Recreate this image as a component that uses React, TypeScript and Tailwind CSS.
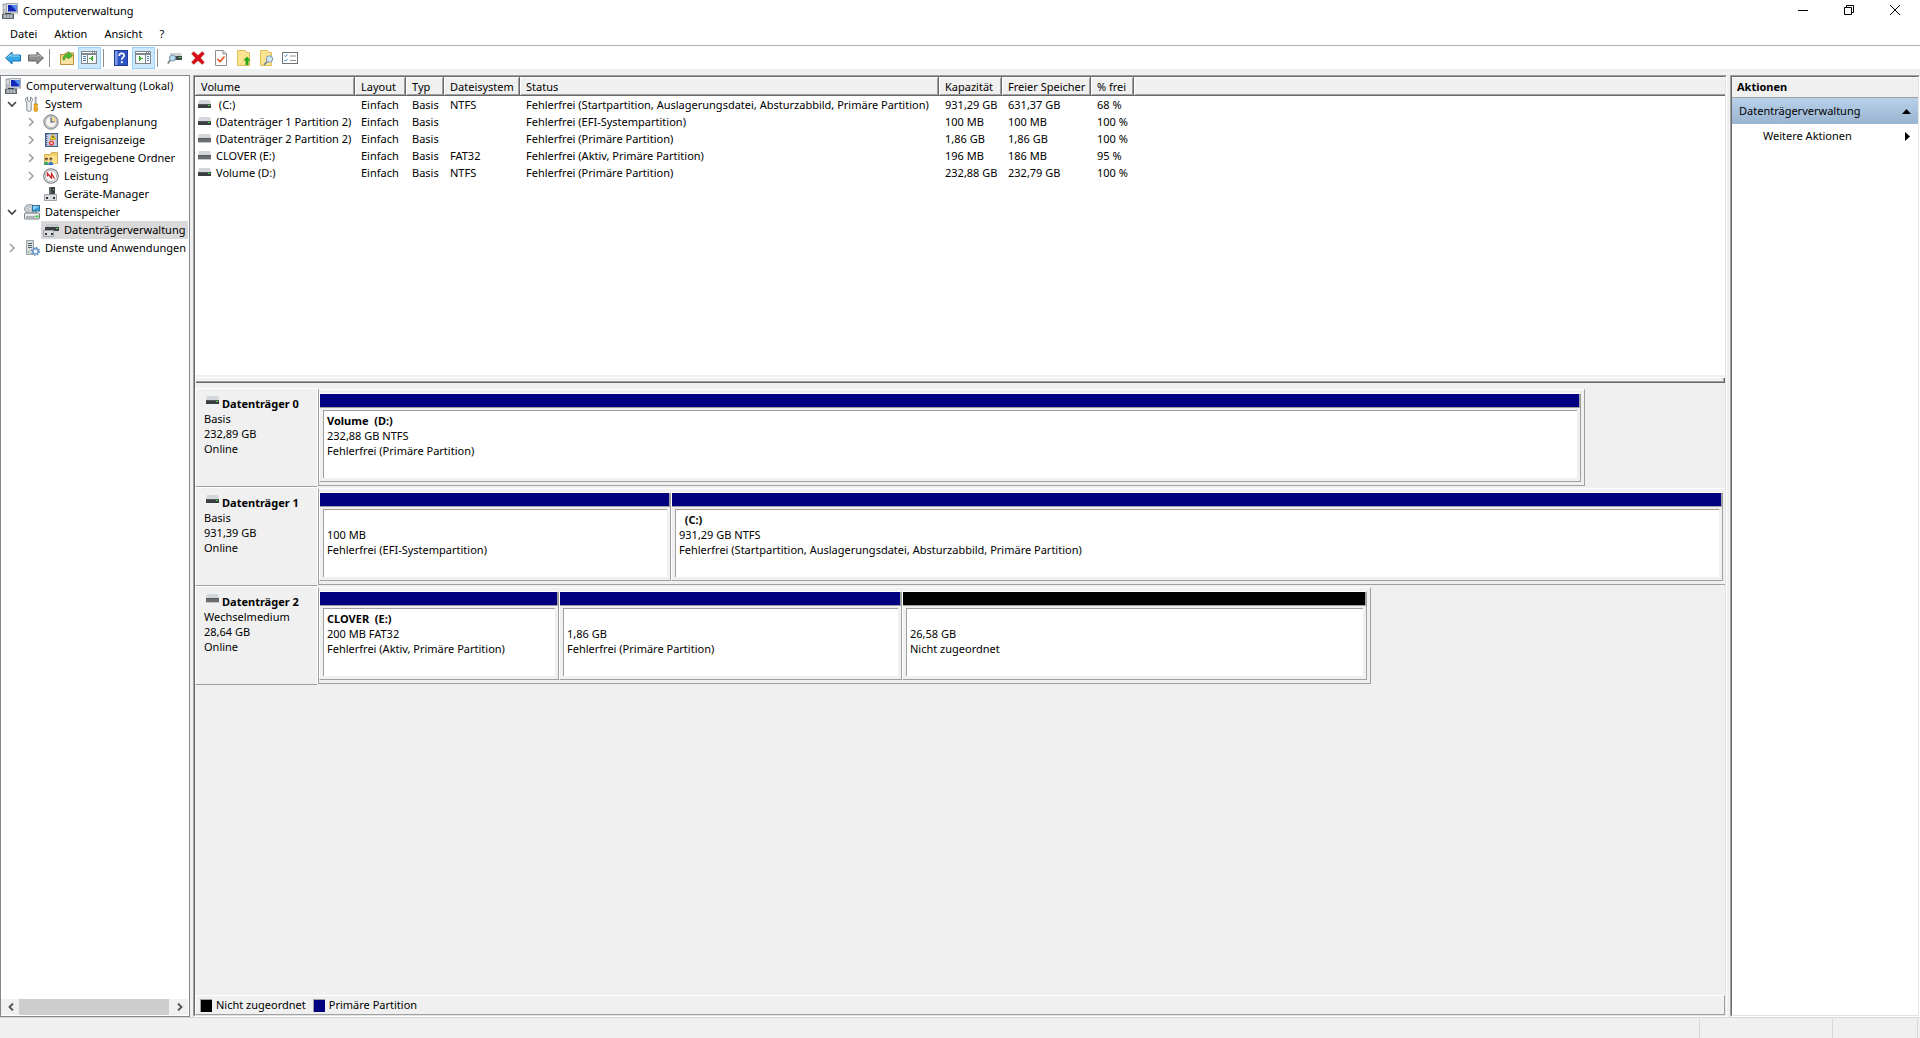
import type { ReactNode } from 'react'
import clsx from 'clsx'

/* ---------- Icons ---------- */

const ComputerIcon = () => (
  <svg width="16" height="16" viewBox="0 0 16 16" aria-hidden="true">
    <rect x="1" y="1" width="4" height="10" fill="#b9bec4" stroke="#7d848b" strokeWidth="0.6" />
    <path d="M1.500 3h3M1.500 5h3" stroke="#eef1f3" />
    <rect x="4.500" y="0.500" width="11" height="9.500" fill="#dfe3e6" stroke="#a3a9af" />
    <rect x="6" y="2" width="8.500" height="6.500" fill="#1426b8" />
    <path d="M9 2h5.500v6z" fill="#4f8cf0" />
    <path d="M8 10h4v2H8z" fill="#9aa1a8" />
    <rect x="0.500" y="11.500" width="11" height="4" fill="#8a939b" stroke="#5d656d" />
    <path d="M3 11v4M6 11v4M9 11v4" stroke="#d8dde1" />
    <path d="M3 10.500h6" stroke="#3c4349" />
  </svg>
)

const ToolsIcon = () => (
  <svg width="16" height="16" viewBox="0 0 16 16" aria-hidden="true">
    <path d="M3.500 1v3.500L5 5.500l1.500-1V1c2.400 1 2.600 4 .7 5.200V14c0 1.800-4.400 1.800-4.400 0V6.200C.900 5 1.100 2 3.500 1z" fill="#eceeef" stroke="#777c80" strokeWidth="0.9" />
    <path d="M11 1h1.500l.3 1.500-.6.5v5h-1.100V3l-.6-.5z" fill="#b4b8bb" stroke="#84898d" strokeWidth="0.5" />
    <path d="M10 8h3.500v1.500l-.6.8.6 1.200v3c0 1.200-3.500 1.200-3.500 0v-3l.6-1.200-.6-.8z" fill="#f3b01c" stroke="#b67a08" strokeWidth="0.6" />
  </svg>
)

const ClockIcon = () => (
  <svg width="16" height="16" viewBox="0 0 16 16" aria-hidden="true">
    <circle cx="8" cy="8" r="7.200" fill="#c3c8cc" stroke="#767b80" strokeWidth="0.9" />
    <circle cx="8" cy="8" r="5.500" fill="#f9f6ee" stroke="#9ca1a5" strokeWidth="0.6" />
    <path d="M8 8V2.700A5.300 5.300 0 0 1 13.300 8z" fill="#f2d398" />
    <path d="M8 3.500V8h3.500" fill="none" stroke="#3d5b8a" strokeWidth="1.100" />
  </svg>
)

const EventIcon = () => (
  <svg width="16" height="16" viewBox="0 0 16 16" aria-hidden="true">
    <rect x="2.500" y="1.500" width="12" height="13" fill="#aebbd0" stroke="#46608b" />
    <path d="M4 4h9M4 6h9M4 8h9M4 10h9M4 12h9" stroke="#e8edf5" strokeWidth="0.8" />
    <path d="M3.500 2v12" stroke="#3b578a" strokeWidth="1.500" strokeDasharray="1 1" />
    <path d="M10 2l3 5.500H7z" fill="#fbd21d" stroke="#a98604" strokeWidth="0.5" />
    <path d="M10 4v2" stroke="#222" />
    <circle cx="8.500" cy="11" r="2.600" fill="#dd3b32" />
    <path d="M7.300 9.800l2.400 2.400M9.700 9.800l-2.400 2.400" stroke="#fff" strokeWidth="0.9" />
  </svg>
)

const SharedFolderIcon = () => (
  <svg width="16" height="16" viewBox="0 0 16 16" aria-hidden="true">
    <path d="M1.500 4.500h6l1-2h6v11h-13z" fill="#f5d06c" stroke="#cfa03a" strokeWidth="0.8" />
    <path d="M2 6h12v7.500H2z" fill="#fbe08e" />
    <circle cx="3.500" cy="9" r="1.500" fill="#5f4326" />
    <circle cx="7.800" cy="9" r="1.500" fill="#5f4326" />
    <path d="M.8 15c0-4.500 5-4.500 5 0z" fill="#39a267" />
    <path d="M5.300 15c0-4.500 5-4.500 5 0z" fill="#3579c4" />
    <path d="M2.800 10h1.800M7 10h1.800" stroke="#f1c6a2" strokeWidth="1.200" />
  </svg>
)

const GaugeIcon = () => (
  <svg width="16" height="16" viewBox="0 0 16 16" aria-hidden="true">
    <circle cx="8" cy="8" r="7.300" fill="#fafafa" stroke="#73787c" strokeWidth="1.100" />
    <circle cx="8" cy="8" r="5.600" fill="#fff" stroke="#8d9195" strokeWidth="0.7" />
    <path d="M4.500 8.500v-3l4 4.500V5.500l3 5" fill="none" stroke="#d31e22" strokeWidth="1.300" />
  </svg>
)

const DeviceIcon = () => (
  <svg width="16" height="16" viewBox="0 0 16 16" aria-hidden="true">
    <path d="M6 1h6v8H6z" fill="#3c4045" />
    <path d="M6 1h2v8H6z" fill="#666c72" />
    <path d="M10 3h1v1h-1z" fill="#4be04b" />
    <path d="M1.500 8.500h12v6h-12z" fill="#d8dbdd" stroke="#9ba0a4" />
    <path d="M3 11h2v2H3zM10 11h2v2h-2z" fill="#2f3337" />
  </svg>
)

const StorageIcon = () => (
  <svg width="16" height="16" viewBox="0 0 16 16" aria-hidden="true">
    <ellipse cx="6" cy="5" rx="5.500" ry="4.500" fill="#c9ced2" stroke="#848a8f" strokeWidth="0.8" />
    <circle cx="6" cy="5" r="1.400" fill="#fff" stroke="#868c91" strokeWidth="0.5" />
    <rect x="8.500" y="1.500" width="7" height="5.500" fill="#3ca3dd" stroke="#2a6f9e" />
    <path d="M9 2h6L9 6z" fill="#8fd3f5" />
    <path d="M11 7.500h2V9h-2z" fill="#77808a" />
    <rect x="0.500" y="9" width="15" height="6" rx="1" fill="#e9ebec" stroke="#787e83" />
    <path d="M2 13h9" stroke="#6e7479" />
    <path d="M11.500 11.500h3v2h-3z" fill="#3ccf3c" />
  </svg>
)

const DiskManagementIcon = () => (
  <svg width="16" height="16" viewBox="0 0 16 16" aria-hidden="true">
    <path d="M4 2h11l1 3H2z" fill="#c5c9cc" />
    <path d="M2 5h14v4H2z" fill="#3b3f43" />
    <path d="M13 6h2v1h-2z" fill="#4be04b" />
    <path d="M0.500 8.500h10v6h-10z" fill="#dcdfe1" stroke="#9ba0a4" />
    <path d="M2 11h2v2H2zM8 11h2v2H8z" fill="#2f3337" />
  </svg>
)

const ServicesIcon = () => (
  <svg width="16" height="16" viewBox="0 0 16 16" aria-hidden="true">
    <path d="M2.500 0.500h7v14h-7z" fill="#d6dbde" stroke="#9aa1a6" />
    <path d="M4 3.500h4M4 5.500h4M4 7.500h4" stroke="#566069" />
    <path d="M4 12h1.500" stroke="#39b54a" />
    <circle cx="11.500" cy="11.300" r="2.700" fill="#fff" stroke="#6a9bcb" strokeWidth="1.700" />
    <circle cx="11.500" cy="11.300" r="4" fill="none" stroke="#5b8bbd" strokeWidth="1.200" strokeDasharray="1.500 1.640" />
  </svg>
)

const DriveIcon = ({ removable = false }: { removable?: boolean }) => (
  <svg width="13" height="9" viewBox="0 0 13 9" className="shrink-0" aria-hidden="true">
    <path d="M1 0h11l1 4H0z" fill="#d3d6da" />
    <path d="M0 4h13v4H0z" fill={removable ? '#6a6d70' : '#3a3d40'} />
    <path d="M0 4h13v1H0z" fill="#55585b" />
    {removable ? <path d="M0 8h13v1H0z" fill="#c2c6ca" /> : <path d="M10 5h2v1h-2z" fill="#35e535" />}
  </svg>
)

const Arrow = ({ back = false }: { back?: boolean }) => (
  <svg width="16" height="14" viewBox="0 0 16 14" className={back ? '' : 'rotate-180'} aria-hidden="true">
    <path
      d="M.6 7L7 1v3h8.500v6H7v3z"
      fill={back ? '#35a7e4' : '#8d8f91'}
      stroke={back ? '#1b6fae' : '#5c5e60'}
      strokeLinejoin="round"
    />
    <path d={back ? 'M2.500 6.500L6 3.200V5h8.500' : 'M2.500 8L6 10.800V9h8.500'} fill="none" stroke={back ? '#9adcf8' : '#c0c1c2'} />
  </svg>
)

const FolderArrowIcon = () => (
  <svg width="16" height="16" viewBox="0 0 16 16" aria-hidden="true">
    <path d="M1.500 4.500h4l1-1.500h8v11.500h-13z" fill="#f3cf73" stroke="#b98f38" />
    <path d="M2 8h12v6H2z" fill="#fae3a0" />
    <path d="M4 10c0-4 2-6 5-6V1.500l4.500 4L9 9V7C7 7 5.500 8 5.500 10z" fill="#4fbb35" stroke="#2b8a1a" strokeWidth="0.6" />
  </svg>
)

const PaneIcon = ({ right = false }: { right?: boolean }) => (
  <svg width="17" height="15" viewBox="0 0 17 15" shapeRendering="crispEdges" aria-hidden="true">
    <path d="M0 1h16v13H0z" fill="#7f868d" />
    <path d="M1 5h14v8H1z" fill="#fbfbfb" />
    <path d="M1 2h10v1H1zM12 2h1v1h-1zM14 2h1v1h-1z" fill="#fff" />
    {right ? (
      <>
        <path d="M10 5h1v8h-1z" fill="#7f868d" />
        <path d="M12 6h2v1h-2zM12 8h2v1h-2zM12 10h2v1h-2z" fill="#4f7db5" />
        <path d="M4 6v5l4-2.500z" fill="#35b22a" />
      </>
    ) : (
      <>
        <path d="M6 5h1v8H6z" fill="#7f868d" />
        <path d="M2 6h3v1H2zM2 8h3v1H2zM2 10h3v1H2z" fill="#4f7db5" />
        <path d="M12 6v5L8 8.500z" fill="#35b22a" />
      </>
    )}
  </svg>
)

const HelpIcon = () => (
  <svg width="14" height="16" viewBox="0 0 14 16" aria-hidden="true">
    <rect x="0.500" y="0.500" width="13" height="15" fill="#2f55c4" stroke="#1f3c96" />
    <path d="M1 1h2.500v14H1z" fill="#7e9be6" />
    <path d="M5.200 6c0-3.300 5-3.300 5-.5 0 2-2.400 2-2.400 4.300" fill="none" stroke="#fff" strokeWidth="1.700" />
    <circle cx="7.800" cy="12.200" r="1.100" fill="#fff" />
  </svg>
)

const DiskSearchIcon = () => (
  <svg width="16" height="14" viewBox="0 0 16 14" aria-hidden="true">
    <path d="M3 2h11l1 3H3z" fill="#cfd2d5" />
    <path d="M3 5h12v4H3z" fill="#44484c" />
    <path d="M12 6h2v1h-2z" fill="#35e535" />
    <circle cx="5.500" cy="7" r="3" fill="#bcdcf2" stroke="#7694ad" />
    <path d="M3.200 9.300L.8 12.500" stroke="#7b7f84" strokeWidth="1.800" />
  </svg>
)

const DeleteIcon = () => (
  <svg width="14" height="14" viewBox="0 0 14 14" aria-hidden="true">
    <path d="M2.800.7L7 4.600 11.200.7l2.100 2L9.400 7l3.900 4.300-2.100 2L7 9.400l-4.200 3.900-2.100-2L4.600 7 .7 2.700z" fill="#dc0d17" stroke="#a9060e" strokeWidth="0.6" />
  </svg>
)

const CheckDocIcon = () => (
  <svg width="12" height="16" viewBox="0 0 12 16" aria-hidden="true">
    <path d="M.5.5H8L11.500 4v11.500H.5z" fill="#fdfdfd" stroke="#8b8f93" />
    <path d="M8 .5V4h3.500" fill="none" stroke="#8b8f93" />
    <path d="M2.500 9L5 11.500 9.500 6.500" fill="none" stroke="#e8501c" strokeWidth="1.600" />
  </svg>
)

const FolderUpIcon = () => (
  <svg width="14" height="16" viewBox="0 0 14 16" aria-hidden="true">
    <path d="M.5.500h8l1 2h3v13H.500z" fill="#fbe391" stroke="#e2bf5d" />
    <path d="M10 6.500l3.700 4h-2.200V15h-3v-4.500H6.300z" fill="#2aa51c" />
  </svg>
)

const FolderSearchIcon = () => (
  <svg width="14" height="16" viewBox="0 0 14 16" aria-hidden="true">
    <path d="M.500.500h7l1 2h3v13H.500z" fill="#fbe391" stroke="#e2bf5d" />
    <circle cx="9.500" cy="9" r="3.200" fill="#cfe6f7" stroke="#7f99ae" />
    <path d="M7.200 11.500L4 15" stroke="#6d83a0" strokeWidth="1.700" />
  </svg>
)

const ChecklistIcon = () => (
  <svg width="16" height="14" viewBox="0 0 16 14" aria-hidden="true">
    <rect x="0.500" y="1.500" width="15" height="11" fill="#fff" stroke="#6d7378" />
    <path d="M2.500 4.500l1 1.200L5.500 3.500M2.500 9l1 1.200L5.500 8" fill="none" stroke="#3b86d0" />
    <path d="M8 5h6M8 9.500h6" stroke="#8b9094" />
  </svg>
)

const Chevron = ({ open = false }: { open?: boolean }) => (
  <svg width="10" height="10" viewBox="0 0 10 10" fill="none" strokeWidth="1.600" aria-hidden="true">
    {open ? <path d="M1 3l4 4 4-4" stroke="#404040" /> : <path d="M3 1l4 4-4 4" stroke="#a0a0a0" />}
  </svg>
)

/* ---------- Data ---------- */

type TreeNode = {
  label: string
  depth: 0 | 1 | 2
  icon: ReactNode
  open?: boolean
  selected?: boolean
}

const tree: TreeNode[] = [
  { label: 'Computerverwaltung (Lokal)', depth: 0, icon: <ComputerIcon /> },
  { label: 'System', depth: 1, icon: <ToolsIcon />, open: true },
  { label: 'Aufgabenplanung', depth: 2, icon: <ClockIcon />, open: false },
  { label: 'Ereignisanzeige', depth: 2, icon: <EventIcon />, open: false },
  { label: 'Freigegebene Ordner', depth: 2, icon: <SharedFolderIcon />, open: false },
  { label: 'Leistung', depth: 2, icon: <GaugeIcon />, open: false },
  { label: 'Geräte-Manager', depth: 2, icon: <DeviceIcon /> },
  { label: 'Datenspeicher', depth: 1, icon: <StorageIcon />, open: true },
  { label: 'Datenträgerverwaltung', depth: 2, icon: <DiskManagementIcon />, selected: true },
  { label: 'Dienste und Anwendungen', depth: 1, icon: <ServicesIcon />, open: false },
]

const indent = { 0: 'pl-0.5', 1: 'pl-[3px]', 2: 'pl-[22px]' }

const columns = [
  { label: 'Volume', width: 'w-[160px]' },
  { label: 'Layout', width: 'w-[51px]' },
  { label: 'Typ', width: 'w-[38px]' },
  { label: 'Dateisystem', width: 'w-[76px]' },
  { label: 'Status', width: 'w-[419px]' },
  { label: 'Kapazität', width: 'w-[63px]' },
  { label: 'Freier Speicher', width: 'w-[89px]' },
  { label: '% frei', width: 'w-[43px]' },
]

const volumes = [
  { name: ' (C:)', fs: 'NTFS', status: 'Fehlerfrei (Startpartition, Auslagerungsdatei, Absturzabbild, Primäre Partition)', size: '931,29 GB', free: '631,37 GB', pct: '68 %' },
  { name: '(Datenträger 1 Partition 2)', fs: '', status: 'Fehlerfrei (EFI-Systempartition)', size: '100 MB', free: '100 MB', pct: '100 %' },
  { name: '(Datenträger 2 Partition 2)', fs: '', status: 'Fehlerfrei (Primäre Partition)', size: '1,86 GB', free: '1,86 GB', pct: '100 %', removable: true },
  { name: 'CLOVER (E:)', fs: 'FAT32', status: 'Fehlerfrei (Aktiv, Primäre Partition)', size: '196 MB', free: '186 MB', pct: '95 %', removable: true },
  { name: 'Volume (D:)', fs: 'NTFS', status: 'Fehlerfrei (Primäre Partition)', size: '232,88 GB', free: '232,79 GB', pct: '100 %' },
]

// `share` is the lane width in percent, `weight` the relative width of a partition in its lane
const disks = [
  {
    name: 'Datenträger 0',
    type: 'Basis',
    size: '232,89 GB',
    share: 90.05,
    partitions: [{ title: 'Volume  (D:)', size: '232,88 GB NTFS', status: 'Fehlerfrei (Primäre Partition)', weight: 1 }],
  },
  {
    name: 'Datenträger 1',
    type: 'Basis',
    size: '931,39 GB',
    share: 100,
    partitions: [
      { title: '', size: '100 MB', status: 'Fehlerfrei (EFI-Systempartition)', weight: 350 },
      { title: '  (C:)', size: '931,29 GB NTFS', status: 'Fehlerfrei (Startpartition, Auslagerungsdatei, Absturzabbild, Primäre Partition)', weight: 1050 },
    ],
  },
  {
    name: 'Datenträger 2',
    type: 'Wechselmedium',
    size: '28,64 GB',
    share: 74.84,
    removable: true,
    partitions: [
      { title: 'CLOVER  (E:)', size: '200 MB FAT32', status: 'Fehlerfrei (Aktiv, Primäre Partition)', weight: 238 },
      { title: '', size: '1,86 GB', status: 'Fehlerfrei (Primäre Partition)', weight: 341 },
      { title: '', size: '26,58 GB', status: 'Nicht zugeordnet', weight: 463, unallocated: true },
    ],
  },
]

/* ---------- Parts ---------- */

function ToolButton({ label, active = false, children }: { label: string; active?: boolean; children: ReactNode }) {
  return (
    <button
      type="button"
      aria-label={label}
      className={clsx('flex h-[22px] w-[23px] items-center justify-center', active && 'border border-[#99d1ff] bg-[#cce8ff]')}
    >
      {children}
    </button>
  )
}

const ToolSeparator = () => <div className="mr-[5px] ml-0.5 h-[18px] w-px bg-[#8d8d8d]" />

// Classic two-pixel sunken frame
function Sunken({ className, children }: { className?: string; children: ReactNode }) {
  return (
    <div className={clsx('flex border border-t-[#a0a0a0] border-r-white border-b-white border-l-[#a0a0a0]', className)}>
      <div className="flex min-w-0 flex-1 flex-col border border-t-[#696969] border-r-[#e3e3e3] border-b-[#e3e3e3] border-l-[#696969]">
        {children}
      </div>
    </div>
  )
}

function TitleBar() {
  return (
    <header className="flex h-6 shrink-0 items-center bg-white pb-0.5 pl-0.5">
      <ComputerIcon />
      <h1 className="ml-[5px] flex-1">Computerverwaltung</h1>
      <div className="mr-0.5 flex self-start">
        <button type="button" aria-label="Minimieren" className="flex h-5 w-[46px] items-center justify-center">
          <svg width="10" height="11" viewBox="0 0 10 11" aria-hidden="true">
            <path d="M0 5.500h10" stroke="#000" />
          </svg>
        </button>
        <button type="button" aria-label="Verkleinern" className="flex h-5 w-[46px] items-center justify-center">
          <svg width="10" height="10" viewBox="0 0 10 10" fill="none" stroke="#000" aria-hidden="true">
            <path d="M.5 2.500h7v7h-7zM2.500 2.500v-2h7v7h-2" />
          </svg>
        </button>
        <button type="button" aria-label="Schließen" className="flex h-5 w-[46px] items-center justify-center">
          <svg width="10" height="10" viewBox="0 0 10 10" stroke="#000" aria-hidden="true">
            <path d="M0 0l10 10M10 0L0 10" />
          </svg>
        </button>
      </div>
    </header>
  )
}

function MenuBar() {
  return (
    <nav className="flex h-[22px] shrink-0 gap-px border-b border-[#b0b0b0] bg-white pb-0.5 pl-0.5">
      {['Datei', 'Aktion', 'Ansicht', '?'].map((item) => (
        <button key={item} type="button" className="px-2">
          {item}
        </button>
      ))}
    </nav>
  )
}

function Toolbar() {
  return (
    <div className="flex h-[23px] shrink-0 items-center bg-white pl-px">
      <ToolButton label="Zurück"><Arrow back /></ToolButton>
      <ToolButton label="Vorwärts"><Arrow /></ToolButton>
      <ToolSeparator />
      <ToolButton label="Eine Ebene nach oben"><FolderArrowIcon /></ToolButton>
      <ToolButton label="Konsolenstruktur" active><PaneIcon /></ToolButton>
      <ToolSeparator />
      <ToolButton label="Hilfe"><HelpIcon /></ToolButton>
      <ToolButton label="Aktionsbereich" active><PaneIcon right /></ToolButton>
      <ToolSeparator />
      <ToolButton label="Datenträger neu einlesen"><DiskSearchIcon /></ToolButton>
      <ToolButton label="Löschen"><DeleteIcon /></ToolButton>
      <ToolButton label="Eigenschaften"><CheckDocIcon /></ToolButton>
      <ToolButton label="Öffnen"><FolderUpIcon /></ToolButton>
      <ToolButton label="Durchsuchen"><FolderSearchIcon /></ToolButton>
      <ToolButton label="Einstellungen"><ChecklistIcon /></ToolButton>
    </div>
  )
}

function TreePane() {
  return (
    <aside className="flex w-[190px] shrink-0 flex-col border border-[#828790] bg-white p-px pl-0">
      <ul className="flex-1 overflow-hidden">
        {tree.map(({ label, depth, icon, open, selected }) => (
          <li key={label} className={clsx('flex h-[18px]', indent[depth])}>
            {depth > 0 && (
              <span className="mr-0.5 flex w-4 shrink-0 items-center justify-center">
                {open !== undefined && (
                  <button type="button" aria-label={label} aria-expanded={open}>
                    <Chevron open={open} />
                  </button>
                )}
              </span>
            )}
            <button
              type="button"
              className={clsx('flex flex-1 items-center gap-[5px] pl-0.5 whitespace-nowrap', selected && 'bg-[#d9d9d9]')}
            >
              <span className="shrink-0">{icon}</span>
              {label}
            </button>
          </li>
        ))}
      </ul>
      <div className="flex h-4 items-stretch bg-[#f0f0f0] pl-px">
        <button type="button" aria-label="Nach links" className="flex w-[17px] items-center justify-center">
          <svg width="8" height="8" viewBox="0 0 8 8" fill="none" stroke="#505050" strokeWidth="1.800" aria-hidden="true">
            <path d="M6 .5L2.500 4 6 7.500" />
          </svg>
        </button>
        <div className="w-[150px] bg-[#cdcdcd]" />
        <button type="button" aria-label="Nach rechts" className="ml-auto flex w-[17px] items-center justify-center">
          <svg width="8" height="8" viewBox="0 0 8 8" fill="none" stroke="#505050" strokeWidth="1.800" aria-hidden="true">
            <path d="M2 .5L5.500 4 2 7.500" />
          </svg>
        </button>
      </div>
    </aside>
  )
}

const headerCell =
  'h-[19px] border-r border-b border-[#696969] bg-[#f0f0f0] p-0 pt-0.5 pl-1.5 text-left font-normal shadow-[inset_1px_1px_#fff,inset_-1px_-1px_#a0a0a0]'

function VolumeList() {
  return (
    <section className="flex h-[306px] shrink-0 flex-col">
      <div className="flex-1 overflow-hidden bg-white">
        <table className="w-full table-fixed border-separate border-spacing-0 whitespace-nowrap">
          <thead>
            <tr>
              {columns.map(({ label, width }) => (
                <th key={label} scope="col" className={clsx(headerCell, width)}>
                  {label}
                </th>
              ))}
              <td className="border-b border-[#696969] bg-[#f0f0f0] shadow-[inset_1px_1px_#fff,inset_0_-1px_#a0a0a0]" />
            </tr>
          </thead>
          <tbody>
            {volumes.map((v) => (
              <tr key={v.name} className="h-[17px] [&>td]:p-0 [&>td]:pl-1.5">
                <td>
                  <div className="-ml-[3px] flex items-center gap-[5px] whitespace-pre">
                    <DriveIcon removable={v.removable} />
                    {v.name}
                  </div>
                </td>
                <td>Einfach</td>
                <td>Basis</td>
                <td>{v.fs}</td>
                <td>{v.status}</td>
                <td>{v.size}</td>
                <td>{v.free}</td>
                <td>{v.pct}</td>
                <td />
              </tr>
            ))}
          </tbody>
        </table>
      </div>
      <div className="mt-0.5 h-1.5 shadow-[inset_1px_1px_#fff,inset_-1px_-1px_#696969,inset_-2px_-2px_#a0a0a0]" />
    </section>
  )
}

type Partition = { title: string; size: string; status: string; weight: number; unallocated?: boolean }

function PartitionBox({ title, size, status, weight, unallocated }: Partition) {
  return (
    <button
      type="button"
      className="flex min-w-0 basis-0 flex-col border border-t-white border-r-[#a0a0a0] border-b-[#a0a0a0] border-l-white text-left"
      style={{ flexGrow: weight }}
    >
      <span
        className={clsx('block h-3.5 w-full border-r border-b border-[#a0a0a0]', unallocated ? 'bg-black' : 'bg-[#000080]')}
      />
      <span className="flex w-full flex-1 px-[3px] pt-0.5 pb-[3px]">
        <span className="flex min-w-0 flex-1 flex-col overflow-hidden border-t border-l border-[#a0a0a0] bg-white px-[3px] pt-0.5 leading-[15px] whitespace-pre">
          <b className="h-[15px]">{title}</b>
          <span>{size}</span>
          <span>{status}</span>
        </span>
      </span>
    </button>
  )
}

function DiskPane() {
  return (
    <section className="flex-1 overflow-hidden pt-[5px]">
      {disks.map((disk) => (
        <div key={disk.name} className="flex h-[99px]">
          <div className="w-[123px] shrink-0 border border-t-white border-r-white border-b-[#a0a0a0] border-l-white pt-[7px] pl-2 leading-[15px]">
            <div className="flex pl-0.5">
              <DriveIcon removable={disk.removable} />
              <b className="ml-[3px]">{disk.name}</b>
            </div>
            <p>{disk.type}</p>
            <p>{disk.size}</p>
            <p>Online</p>
          </div>
          <div className="flex flex-1 py-px">
            <div
              className={clsx(
                'flex border-t border-b border-l border-t-white border-b-[#a0a0a0] border-l-[#a0a0a0] py-[3px]',
                disk.share < 100 ? 'border-r border-r-[#a0a0a0] pr-[3px]' : 'pr-0.5',
              )}
              style={{ width: `${disk.share}%` }}
            >
              {disk.partitions.map((p) => (
                <PartitionBox key={p.size} {...p} />
              ))}
            </div>
          </div>
        </div>
      ))}
    </section>
  )
}

function Legend() {
  return (
    <footer className="flex h-5 shrink-0 items-center border border-t-white border-r-[#a0a0a0] border-b-[#a0a0a0] border-l-white pl-1">
      <span className="mr-1 h-[13px] w-3 border-t border-l border-[#a0a0a0] bg-black" />
      Nicht zugeordnet
      <span className="mr-1 ml-[7px] h-[13px] w-3 border-t border-l border-[#a0a0a0] bg-[#000080]" />
      Primäre Partition
    </footer>
  )
}

function ActionsPane() {
  return (
    <Sunken className="w-[190px] shrink-0 bg-white">
      <h2 className="h-[21px] border-t border-b border-t-white border-b-[#a0a0a0] bg-[#f0f0f0] pl-[5px] leading-[18px] font-bold">
        Aktionen
      </h2>
      <button
        type="button"
        className="flex h-[26px] items-center justify-between bg-linear-to-b from-[#b9d1ea] to-[#99b4d1] pr-[7px] pl-[7px]"
      >
        Datenträgerverwaltung
        <svg width="9" height="5" viewBox="0 0 9 5" aria-hidden="true">
          <path d="M4.500 0L9 5H0z" />
        </svg>
      </button>
      <button type="button" className="flex h-6 items-center justify-between pr-2 pl-[31px]">
        Weitere Aktionen
        <svg width="5" height="9" viewBox="0 0 5 9" aria-hidden="true">
          <path d="M0 0l5 4.500L0 9z" />
        </svg>
      </button>
    </Sunken>
  )
}

export default function App() {
  return (
    <div className="flex h-screen flex-col overflow-hidden bg-[#f0f0f0] font-['Noto_Sans','Segoe_UI',sans-serif] text-[11px] leading-4 text-black">
      <TitleBar />
      <MenuBar />
      <Toolbar />
      <main className="flex min-h-0 flex-1 gap-[3px] pt-1.5">
        <TreePane />
        <Sunken className="min-w-0 flex-1">
          <VolumeList />
          <DiskPane />
          <Legend />
        </Sunken>
        <ActionsPane />
      </main>
      <div className="flex h-[21px] shrink-0 border-t border-[#d7d7d7] pt-px pr-0.5">
        <div className="flex-1 border-r border-[#d7d7d7]" />
        <div className="w-[133px] border-r border-[#d7d7d7]" />
        <div className="w-[85px] border-r border-[#d7d7d7]" />
      </div>
    </div>
  )
}
